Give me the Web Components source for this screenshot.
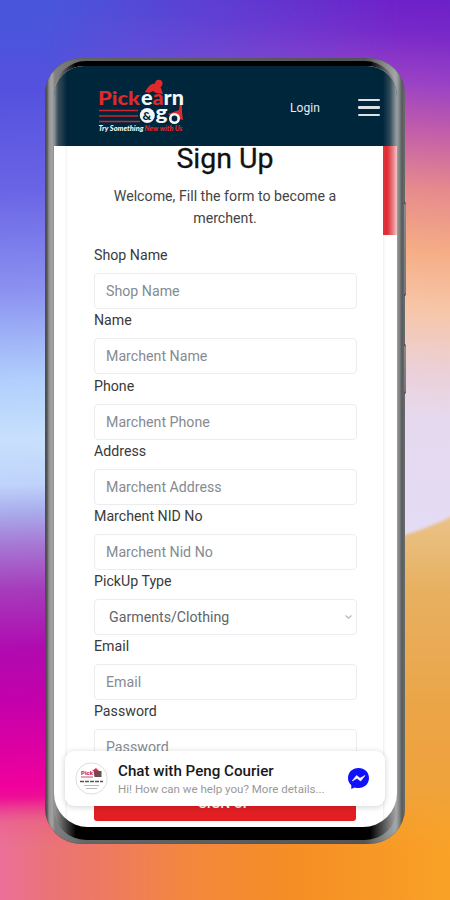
<!DOCTYPE html>
<html lang="en">
<head>
<meta charset="utf-8">
<title>Pickearn &amp; go</title>
<style>
  body {
    margin: 0;
    width: 450px;
    height: 900px;
    overflow: hidden;
    font-family: Roboto, "Liberation Sans", sans-serif;
  }
</style>
</head>
<body>
<wall-paper>
  <phone-frame>
    <app-header></app-header>
    <signup-form>
      <form-field label="Shop Name">Shop Name</form-field>
      <form-field label="Name">Marchent Name</form-field>
      <form-field label="Phone">Marchent Phone</form-field>
      <form-field label="Address">Marchent Address</form-field>
      <form-field label="Marchent NID No">Marchent Nid No</form-field>
      <form-field label="PickUp Type" select>Garments/Clothing</form-field>
      <form-field label="Email">Email</form-field>
      <form-field label="Password">Password</form-field>
    </signup-form>
    <chat-bar slot="overlay" name="Chat with Peng Courier">Hi! How can we help you? More details...</chat-bar>
  </phone-frame>
</wall-paper>

<script>
class WallPaper extends HTMLElement {
  connectedCallback() {
    this.attachShadow({ mode: 'open' });
    this.shadowRoot.innerHTML = `
      <style>
        :host {
          display: grid;
          width: 450px;
          height: 900px;
          overflow: hidden;
        }
        .layer, slot {
          grid-area: 1 / 1;
        }
        .layer {
          isolation: isolate;
        }
        .left {
          background: linear-gradient(178deg, #4757dc 0, #5451de 90px, #6a64e5 190px, #8b91f0 290px, #b0cffc 380px, #c8e0fc 440px, #bfd3fb 485px, #a9adec 512px, #a678d4 545px, #a63cbb 590px, #b00ab0 650px, #c600aa 705px, #f0009c 785px, #ee1096 800px, #e95a8c 822px, #e97390 870px, #e8758c 900px);
        }
        .right {
          background: linear-gradient(184deg, #6c20c8 0, #7928c9 35px, #9a42c5 85px, #c05cab 130px, #e68a8d 190px, #f5ac85 250px, #f7c6a8 310px, #ebd0d7 370px, #e6d9ef 420px, #e2def8 600px, #f4a136 800px, #f9a126 900px);
          -webkit-mask-image: linear-gradient(90deg, transparent 45px, #000 400px);
          mask-image: linear-gradient(90deg, transparent 45px, #000 400px);
        }
        .bottom {
          background: linear-gradient(90deg, #ec6f9a 0, #e97378 45px, #ee7b60 110px, #f2883c 190px, #f58e25 290px, #f9a126 450px);
          -webkit-mask-image: linear-gradient(transparent 795px, #000 850px);
          mask-image: linear-gradient(transparent 795px, #000 850px);
        }
      </style>
      <div class="layer left"></div>
      <div class="layer right"></div>
      <svg class="layer" width="450" height="900">
        <defs>
          <linearGradient id="hill" x1="0" y1="0" x2="0" y2="1">
            <stop offset="0" stop-color="#e9c58c"/>
            <stop offset=".2" stop-color="#e7b061"/>
            <stop offset=".5" stop-color="#eba446"/>
            <stop offset="1" stop-color="#f9a126"/>
          </linearGradient>
          <filter id="soft"><feGaussianBlur stdDeviation="1.500"/></filter>
        </defs>
        <path d="M380 542 Q430 530 470 507 V920 H380z" fill="url(#hill)" filter="url(#soft)"/>
      </svg>
      <div class="layer bottom"></div>
      <slot></slot>
    `;
  }
}

class PhoneFrame extends HTMLElement {
  connectedCallback() {
    this.attachShadow({ mode: 'open' });
    this.shadowRoot.innerHTML = `
      <style>
        :host {
          grid-area: 1 / 1;
          position: relative;
          display: block;
          box-sizing: border-box;
          width: 360px;
          height: 786px;
          margin: 58px 0 0 45px;
          padding: 3px 8px 4px 9px;
          border-radius: 36px;
          background: linear-gradient(90deg, #4c4c4c 0, #555 2px, #909090 4px, #a5a5a5 7px, #808080 10px, #666 40px, #555 320px, #a3a8a8 351px, #858989 354px, #555a5c 357px, #707070 360px);
          box-shadow: inset 0 0 1px #444;
        }
        .bezel {
          box-sizing: border-box;
          height: 779px;
          padding: 5px 0 13px;
          border-radius: 32px;
          background: linear-gradient(90deg, #999 0, #000 22px, #000 316px, #aaa 343px);
        }
        .screen {
          position: relative;
          display: flex;
          flex-direction: column;
          height: 761px;
          border-radius: 30px 30px 34px 34px;
          overflow: hidden;
          background: #fff;
        }
        .key {
          position: absolute;
          left: 359px;
          width: 2px;
          border-radius: 0 2px 2px 0;
          background: linear-gradient(#333, #888 3px, #777 calc(100% - 3px), #333);
        }
        .volume { top: 144px; height: 94px; }
        .power { top: 286px; height: 50px; }
      </style>
      <div class="key volume"></div>
      <div class="key power"></div>
      <div class="bezel">
        <div class="screen">
          <slot></slot>
          <slot name="overlay"></slot>
        </div>
      </div>
    `;
  }
}

class BrandLogo extends HTMLElement {
  connectedCallback() {
    this.attachShadow({ mode: 'open' });
    this.shadowRoot.innerHTML = `
      <style>
        :host { display: block; }
        svg { display: block; overflow: visible; }
        text { font-family: Lato, Roboto, sans-serif; font-weight: 900; }
        .red { fill: #e0292b; }
        .white { fill: #f3f7f9; }
      </style>
      <svg width="88" height="55" viewBox="97 78 88 55">
        <path class="red" d="M145 92 q3-6 7-8 l6-1 3 5 2 6 -7-1 -3-2 -4 2z"/>
        <circle class="red" cx="158.800" cy="83.500" r="3.700"/>
        <path class="red" d="M180 101 l2-1 0 12 1 8 -4-1 -2-4 -6 1 -3-2 11-4z"/>
        <text class="red" x="98" y="105" font-size="19" textLength="42" lengthAdjust="spacingAndGlyphs">Pick</text>
        <text x="141" y="105" font-size="20" textLength="43" lengthAdjust="spacingAndGlyphs"><tspan class="white">e</tspan><tspan class="red">a</tspan><tspan class="white">rn</tspan></text>
        <path d="M99 110.500h39M99 116h39M99 121.500h41" stroke="#c92731" stroke-width="1.300"/>
        <circle class="white" cx="147.300" cy="115.500" r="7.500"/>
        <text x="142.500" y="120" font-size="12" fill="#00263c">&amp;</text>
        <text class="white" x="155.500" y="120" font-size="20" textLength="12" lengthAdjust="spacingAndGlyphs">g</text>
        <circle cx="174.500" cy="118.500" r="4.200" fill="#00263c" stroke="#f3f7f9" stroke-width="2.600"/>
        <text class="white" x="98.500" y="130.500" font-size="6.500" font-style="italic" textLength="45" lengthAdjust="spacingAndGlyphs">Try Something</text>
        <text class="red" x="144.500" y="130.500" font-size="6.500" font-style="italic" textLength="38" lengthAdjust="spacingAndGlyphs">New with Us</text>
      </svg>
    `;
  }
}

class AppHeader extends HTMLElement {
  connectedCallback() {
    this.attachShadow({ mode: 'open' });
    this.shadowRoot.innerHTML = `
      <style>
        :host {
          position: relative;
          display: flex;
          flex: none;
          align-items: flex-start;
          box-sizing: border-box;
          height: 80px;
          padding: 12px 17px 0 43px;
          color: #e8edf0;
          background:
            linear-gradient(90deg, #8e969b 0, rgba(70, 86, 96, .8) 4px, transparent 13px, transparent 329px, rgba(80, 98, 108, .6) 336px, #8f999f 342px),
            #00263c;
        }
        .login {
          margin: 22px 38px 0 auto;
          font-size: 12px;
          line-height: 16px;
          letter-spacing: .1px;
        }
        .menu {
          display: grid;
          gap: 5px;
          width: 22px;
          margin-top: 20.600px;
        }
        .menu i {
          height: 2.500px;
          border-radius: 1px;
          background: #dbe1e5;
        }
      </style>
      <brand-logo></brand-logo>
      <span class="login">Login</span>
      <div class="menu"><i></i><i></i><i></i></div>
    `;
  }
}

class SignupForm extends HTMLElement {
  connectedCallback() {
    this.attachShadow({ mode: 'open' });
    this.shadowRoot.innerHTML = `
      <style>
        :host {
          display: grid;
          grid-template-columns: 13px 316px 14px;
          height: 681px;
          overflow: hidden;
        }
        .card {
          box-sizing: border-box;
          padding: 0 27px;
          box-shadow: 0 0 3px rgba(0, 0, 0, .13);
        }
        h1 {
          margin: -6px 0 0;
          font-size: 28.500px;
          font-weight: 400;
          line-height: 38px;
          text-align: center;
          color: #111;
          -webkit-text-stroke: .3px #111;
        }
        p {
          margin: 7px 0 15.400px;
          font-size: 14.200px;
          line-height: 22px;
          text-align: center;
          color: #444;
        }
        .strip {
          grid-column: 3;
          height: 89px;
          background: linear-gradient(90deg, #e8333b 0, #dc2c35 4px, #e76f75 9px, #f6c5c5 14px);
        }
        button {
          display: block;
          width: 262px;
          height: 36px;
          margin-top: 20px;
          border: 0;
          border-radius: 3px;
          background: #e11f22;
          color: #fff;
          font: 500 14px Roboto, sans-serif;
        }
      </style>
      <div></div>
      <div class="card">
        <h1>Sign Up</h1>
        <p>Welcome, Fill the form to become a merchent.</p>
        <slot></slot>
        <button>SIGN UP</button>
      </div>
      <div class="strip"></div>
    `;
  }
}

class FormField extends HTMLElement {
  connectedCallback() {
    const select = this.hasAttribute('select');
    this.attachShadow({ mode: 'open' });
    this.shadowRoot.innerHTML = `
      <style>
        :host {
          display: block;
          height: 65.070px;
          font-size: 14.200px;
        }
        label {
          display: block;
          height: 29px;
          line-height: 22px;
          color: #3a3a3a;
        }
        .box {
          display: flex;
          align-items: center;
          justify-content: space-between;
          box-sizing: border-box;
          width: 263px;
          height: 36px;
          padding: 0 3px 0 ${select ? 14 : 11}px;
          border: 1px solid #ececee;
          border-radius: 4px;
          color: ${select ? '#5f656a' : '#858b91'};
        }
      </style>
      <label>${this.getAttribute('label')}</label>
      <div class="box">
        <span><slot></slot></span>
        ${select ? '<svg width="9" height="6" viewBox="0 0 9 6"><path d="M1.500 1.500 4.500 4.200 7.500 1.500" fill="none" stroke="#b5b5b5" stroke-width="1.200"/></svg>' : ''}
      </div>
    `;
  }
}

class ChatBar extends HTMLElement {
  connectedCallback() {
    this.attachShadow({ mode: 'open' });
    this.shadowRoot.innerHTML = `
      <style>
        :host {
          position: absolute;
          left: 11px;
          bottom: 21px;
          display: flex;
          align-items: center;
          box-sizing: border-box;
          width: 320px;
          height: 55px;
          padding: 0 15px 0 10px;
          border-radius: 9px;
          background: #fff;
          box-shadow: 0 1px 6px rgba(0, 0, 0, .18);
        }
        .text {
          flex: 1;
          margin: 2px 0 0 10px;
          white-space: nowrap;
        }
        .name {
          font-size: 15.150px;
          font-weight: 500;
          line-height: 19px;
          color: #181818;
        }
        .message {
          font-size: 11.550px;
          line-height: 16px;
          color: #999;
        }
      </style>
      <svg width="33" height="33" viewBox="0 0 33 33">
        <circle cx="16.500" cy="16.500" r="15.700" fill="#fff" stroke="#dedede"/>
        <text x="6" y="13" font-size="6" font-weight="900" fill="#d02f4b" textLength="12" lengthAdjust="spacingAndGlyphs">Pick</text>
        <path d="M17 9 l4-3 3 3z" fill="#d02f4b"/>
        <path d="M18.500 9h8v6h-7z" fill="#6c4b55"/>
        <path d="M6 15h12" stroke="#d78a98" stroke-width="1.500"/>
        <path d="M5 19.500h23" stroke="#555" stroke-width="1.500" stroke-dasharray="4 1"/>
        <path d="M9 23.500h15M11 26.500h11" stroke="#bbb"/>
      </svg>
      <div class="text">
        <div class="name">${this.getAttribute('name')}</div>
        <div class="message"><slot></slot></div>
      </div>
      <svg width="23" height="23" viewBox="0 0 23 23">
        <path d="M11.500 1C5.500 1 1 5.300 1 11c0 3 1.300 5.500 3.300 7.300V22l3.300-1.500c1.200.4 2.500.5 3.900.5C17.500 21 22 16.700 22 11S17.500 1 11.500 1z" fill="#1010fb"/>
        <path d="M5.200 14 9.500 8.500 13 11.200 18 8.500 13.700 14 10 11.300z" fill="#fff" stroke="#fff" stroke-width=".6" stroke-linejoin="round"/>
      </svg>
    `;
  }
}

customElements.define('wall-paper', WallPaper);
customElements.define('phone-frame', PhoneFrame);
customElements.define('brand-logo', BrandLogo);
customElements.define('app-header', AppHeader);
customElements.define('signup-form', SignupForm);
customElements.define('form-field', FormField);
customElements.define('chat-bar', ChatBar);
</script>
</body>
</html>
